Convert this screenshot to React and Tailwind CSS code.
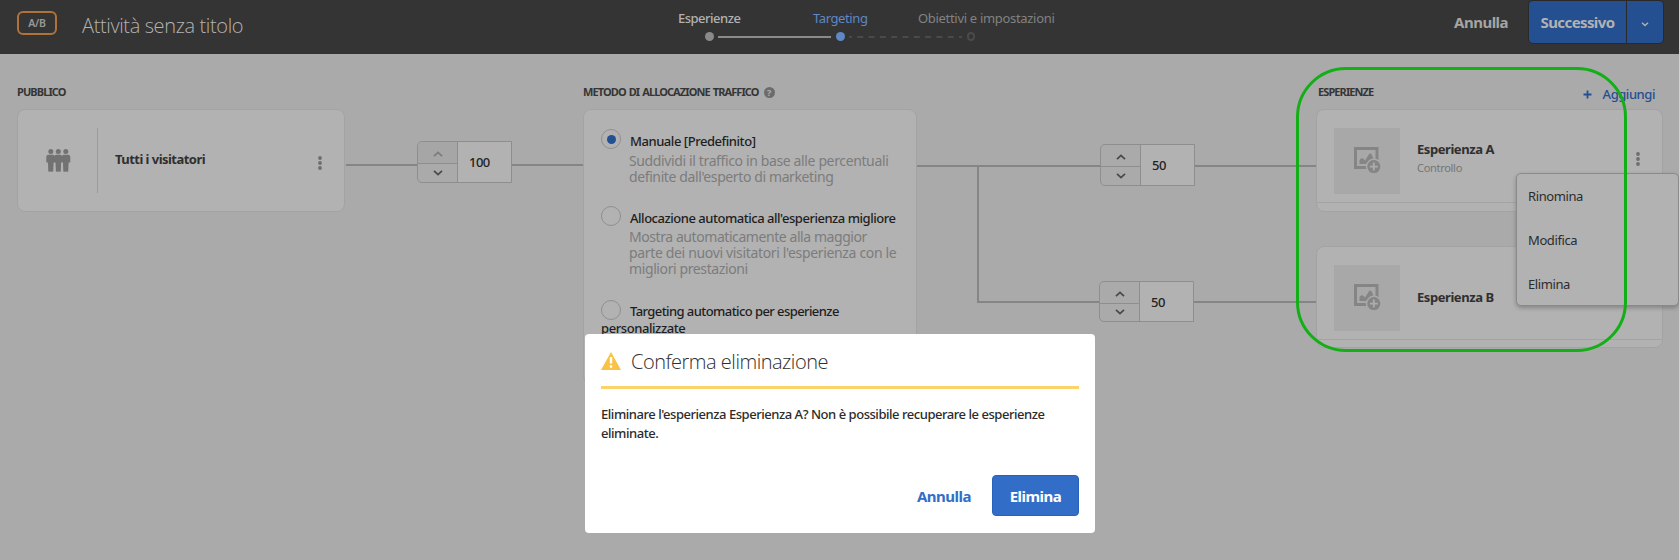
function Chevron({ up = false, className = '' }) {
  return (
    <svg className={className} width="10" height="6" viewBox="0 0 10 6" fill="none" stroke="currentColor" strokeWidth="1.8">
      <path d={up ? 'M1 5.2 L5 1.4 L9 5.2' : 'M1 0.8 L5 4.6 L9 0.8'} />
    </svg>
  );
}

function Kebab({ className }) {
  return (
    <svg className={className} width="4" height="14" viewBox="0 0 4 14" fill="#6e6e6e">
      <circle cx="2" cy="2" r="1.9" />
      <circle cx="2" cy="7" r="1.9" />
      <circle cx="2" cy="12" r="1.9" />
    </svg>
  );
}

function PeopleIcon() {
  return (
    <svg width="25" height="23" viewBox="0 0 25 23" fill="#727272">
      {[4.8, 12.3, 19.8].map((x) => (
        <g key={x} transform={`translate(${x} 0)`}>
          <circle cx="0" cy="2.5" r="2.5" />
          <path d="M-2.9 11 H2.9 L2.4 22.4 H0.5 L0.2 16.5 H-0.2 L-0.5 22.4 H-2.4 Z" />
          <path d="M-2.4 11 H2.4 L2 22.4 H-2 Z" />
        </g>
      ))}
      <path d="M2.5 5.8 H7.2 L8.5 6.8 L9.8 5.8 H14.8 L16.1 6.8 L17.4 5.8 H22.1 Q24.3 5.8 24.3 8 V13.4 H0.3 V8 Q0.3 5.8 2.5 5.8 Z" />
    </svg>
  );
}

function ImageAddIcon() {
  return (
    <svg className="-mt-px" width="27" height="27" viewBox="0 0 27 27">
      <path d="M1.5 20.5 V1.5 H23 V13" fill="none" stroke="#858585" strokeWidth="3" />
      <path d="M0 20.5 H13" stroke="#858585" strokeWidth="3" />
      <path d="M5.5 17 V13 Q7.5 9.8 9.8 12.2 L11 13.4 L15 7.2 Q16.5 5.8 17.6 7.6 L19.5 11.5 L13.5 17 Z" fill="#858585" />
      <circle cx="19.8" cy="19.6" r="8" fill="#a8a8a8" />
      <circle cx="19.8" cy="19.6" r="6.5" fill="#858585" />
      <path d="M19.8 15.6 V23.6 M15.8 19.6 H23.8" stroke="#adadad" strokeWidth="1.8" />
    </svg>
  );
}

function Stepper({ value, upDisabled = false, short = false }) {
  return (
    <div className={`flex w-[95px] shrink-0 rounded-l-[5px] border border-[#8e8e8e] ${short ? 'h-[41px]' : 'h-[42px]'}`}>
      <div className="flex w-[40px] flex-col border-r border-[#8e8e8e] text-[#4a4a4a]">
        <div className={`flex flex-1 items-center justify-center border-b border-[#8e8e8e] pt-[3px] ${upDisabled ? 'rounded-tl-[4px] bg-[#a6a6a6] text-[#7c7c7c]' : ''}`}>
          <Chevron up />
        </div>
        <div className="flex flex-1 items-center justify-center">
          <Chevron />
        </div>
      </div>
      <div className="flex flex-1 items-center bg-[#b2b2b2] pt-0.5 pl-[11px] text-[13px] font-medium tracking-[-0.5px] text-[#222]">{value}</div>
    </div>
  );
}

function Radio({ checked = false }) {
  return (
    <span className={`flex size-5 shrink-0 items-center justify-center rounded-full border border-[#8f8f8f] ${checked ? '-mt-px' : ''}`}>
      {checked && <span className="size-[9px] rounded-full bg-[#234f93]" />}
    </span>
  );
}

function Heading({ children }) {
  return <h2 className="text-[11px] leading-4 font-bold tracking-[-0.9px] [word-spacing:1px] whitespace-nowrap text-[#353535]">{children}</h2>;
}

function ExperienceCard({ name, note, menu = false }) {
  return (
    <div className={`rounded-lg border border-[#a3a3a3] bg-[#b2b2b2] ${menu ? 'h-[103px]' : 'h-[102px]'}`}>
      <div className="flex h-[93px] border-b border-[#a3a3a3] pt-[18px] pl-[17px]">
        <div className="flex size-[66px] shrink-0 items-center justify-center bg-[#a8a8a8]">
          <ImageAddIcon />
        </div>
        <div className={`ml-[17px] flex h-[66px] flex-1 flex-col ${note ? 'pt-[11px]' : 'pt-[22px]'}`}>
          <span className="text-[13px] leading-5 font-bold tracking-[-0.44px] text-[#2f2f2f]">{name}</span>
          {note && <span className="text-[11px] leading-[18px] tracking-[-0.3px] text-[#757575]">{note}</span>}
        </div>
        {menu && <Kebab className="mt-6 mr-[22px]" />}
      </div>
    </div>
  );
}

const Line = ({ className = '' }) => <div className={`h-0.5 bg-[#858585] ${className}`} />;

function Header() {
  return (
    <header className="flex h-[54px] items-start bg-[#343434]">
      <div className="mt-[11px] ml-[17px] flex h-6 w-10 items-center justify-center rounded-[6px] border-2 border-[#b0723a] pt-0.5 text-[10.5px] font-semibold tracking-[-0.2px] text-[#999]">A/B</div>
      <h1 className="mt-3 ml-[25px] w-[596px] font-['Open_Sans'] text-[20px] leading-7 font-light tracking-[-0.38px] text-[#b2b2b2]">Attività senza titolo</h1>
      <div className="w-[776px]">
        <div className="mt-2 flex text-[13px] leading-5 whitespace-nowrap">
          <span className="w-[135px] font-medium tracking-[-0.5px] text-[#b2b2b2]">Esperienze</span>
          <span className="w-[105px] tracking-[-0.4px] text-[#5f88c4]">Targeting</span>
          <span className="tracking-[-0.31px] text-[#828282]">Obiettivi e impostazioni</span>
        </div>
        <div className="mt-[4px] ml-[27px] flex items-center">
          <span className="size-[9px] rounded-full bg-[#8a8a8a]" />
          <span className="ml-1 h-0.5 w-[113px] bg-[#8a8a8a]" />
          <span className="ml-[5px] size-[9px] rounded-full bg-[#5f88c4]" />
          <svg className="ml-1" width="113" height="2">
            <path d="M0 1 H113" stroke="#4a4a4a" strokeWidth="2" strokeDasharray="6 5.3" strokeDashoffset="3" />
          </svg>
          <span className="ml-[5px] h-[9px] w-[8px] rounded-full border-2 border-[#4a4a4a]" />
        </div>
      </div>
      <button className="mt-[11px] w-[75px] text-left text-[15px] leading-[23px] font-bold tracking-[-0.5px] text-[#a4a4a4]">Annulla</button>
      <div className="mt-px flex h-[42px] w-[134px] rounded-[4px] bg-[#244f91] ring-1 ring-[#292929]">
        <button className="w-[97px] text-[15px] font-bold tracking-[-0.6px] text-[#b2b2b2]">Successivo</button>
        <button className="flex flex-1 items-center justify-center border-l border-[#292929]">
          <svg className="mt-1" width="8" height="5" viewBox="0 0 8 5" fill="none" stroke="#b2b2b2" strokeWidth="1.4">
            <path d="M1 0.8 L4 3.6 L7 0.8" />
          </svg>
        </button>
      </div>
    </header>
  );
}

function AllocationCard() {
  return (
    <div className="h-[275px] rounded-lg border border-[#a3a3a3] bg-[#b2b2b2] pt-5 pl-[17px] whitespace-nowrap">
      <div className="flex h-[76px] gap-2">
        <Radio checked />
        <div className="pt-[3px]">
          <div className="pl-px text-[13px] leading-4 font-medium tracking-[-0.45px] text-[#1e1e1e]">Manuale [Predefinito]</div>
          <div className="mt-1 text-[14px] leading-4 text-[#7c7c7c]">
            <div className="tracking-[-0.37px]">Suddividi il traffico in base alle percentuali</div>
            <div className="tracking-[-0.39px]">definite dall'esperto di marketing</div>
          </div>
        </div>
      </div>
      <div className="flex h-[94px] gap-2">
        <Radio />
        <div className="pt-1">
          <div className="pl-px text-[13px] leading-4 font-medium tracking-[-0.47px] text-[#1e1e1e]">Allocazione automatica all'esperienza migliore</div>
          <div className="mt-[3px] text-[14px] leading-4 text-[#7c7c7c]">
            <div className="tracking-[-0.43px]">Mostra automaticamente alla maggior</div>
            <div className="tracking-[-0.34px]">parte dei nuovi visitatori l'esperienza con le</div>
            <div className="tracking-[-0.39px]">migliori prestazioni</div>
          </div>
        </div>
      </div>
      <div className="flex h-5 gap-[9px] text-[13px] leading-[17px] font-medium tracking-[-0.58px] text-[#1e1e1e]">
        <Radio />
        <div className="pt-[3px]">Targeting automatico per esperienze</div>
      </div>
      <div className="text-[13px] leading-[17px] font-medium tracking-[-0.42px] text-[#1e1e1e]">personalizzate</div>
    </div>
  );
}

function Dialog() {
  return (
    <div role="dialog" className="absolute top-[334px] left-[585px] h-[199px] w-[510px] rounded-[4px] bg-white px-4 pt-3">
      <div className="flex h-[43px] items-start border-b-3 border-[#fcd26a]">
        <svg className="mt-1.5" width="20" height="18" viewBox="0 0 20 18">
          <path d="M10 0 L20 18 H0 Z" fill="#f7c245" />
          <path d="M10 5 V11.5 M10 13.2 V15.8" stroke="#fff" strokeWidth="2.4" />
        </svg>
        <h2 className="ml-2.5 font-['Open_Sans'] text-[20px] leading-8 font-light tracking-[-0.48px] text-[#2f2f2f]">Conferma eliminazione</h2>
      </div>
      <p className="mt-4 text-[13px] leading-[19px] font-medium tracking-[-0.46px] whitespace-nowrap text-[#2c2c2c]">
        Eliminare l'esperienza Esperienza A? Non è possibile recuperare le esperienze
        <br />
        eliminate.
      </p>
      <div className="mt-8 flex items-center justify-end">
        <button className="mr-[21px] pt-px text-[15px] font-bold tracking-[-0.5px] text-[#326ec8]">Annulla</button>
        <button className="h-[41px] w-[87px] rounded-[4px] border border-[#2663bd] bg-[#326ec8] pt-px text-[15px] font-bold tracking-[-0.5px] text-white">Elimina</button>
      </div>
    </div>
  );
}

export default function App() {
  return (
    <div className="relative h-[560px] w-[1679px] overflow-hidden bg-[#aaaaaa] font-['Noto_Sans',sans-serif]">
      <Header />
      <main className="flex pt-[30px] pl-[17px]">
        <section className="w-[328px]">
          <Heading>PUBBLICO</Heading>
          <div className="mt-[9px] flex h-[103px] rounded-lg border border-[#a3a3a3] bg-[#b2b2b2]">
            <div className="mt-[18px] flex h-[65px] w-[80px] items-center border-r border-[#9c9c9c] pl-7">
              <PeopleIcon />
            </div>
            <div className="mt-[39px] flex-1 pl-[17px] text-[13px] leading-5 font-bold tracking-[-0.54px] text-[#2f2f2f]">Tutti i visitatori</div>
            <Kebab className="mt-[46px] mr-[22px]" />
          </div>
        </section>

        <div className="mt-[57px] ml-px flex h-[42px] w-[237px]">
          <Line className="mt-[23px] w-[71px]" />
          <Stepper value="100" upDisabled />
          <Line className="mt-[23px] flex-1" />
        </div>

        <section className="w-[334px]">
          <div className="mb-[9px] flex items-center">
            <Heading>METODO DI ALLOCAZIONE TRAFFICO</Heading>
            <span className="ml-[5px] flex size-[11px] items-center justify-center rounded-full bg-[#6c6c6c] text-[9px] leading-none font-bold text-[#b0b0b0]">?</span>
          </div>
          <AllocationCard />
        </section>

        <div className="flex w-[399px]">
          <div className="mt-[81px] h-[138px] w-[62px] border-t-2 border-r-2 border-[#858585]" />
          <div className="flex-1">
            <div className="mt-[60px] flex h-[42px]">
              <Line className="mt-[21px] w-[121px]" />
              <Stepper value="50" />
              <Line className="mt-[21px] flex-1" />
            </div>
            <div className="mt-[95px] flex h-[41px]">
              <Line className="mt-[20px] w-[120px]" />
              <Stepper value="50" short />
              <Line className="mt-[20px] flex-1" />
            </div>
          </div>
        </div>

        <section className="w-[347px]">
          <div className="mb-[9px] flex h-4 justify-between pr-2 pl-0.5">
            <Heading>ESPERIENZE</Heading>
            <button className="mt-1 flex items-center gap-[11px] text-[13px] leading-4 font-medium tracking-[-0.45px] text-[#234f93]">
              <svg width="9" height="9" viewBox="0 0 9 9" stroke="currentColor" strokeWidth="1.8">
                <path d="M4.5 0.5 V8.5 M0.5 4.5 H8.5" />
              </svg>
              Aggiungi
            </button>
          </div>
          <ExperienceCard name="Esperienza A" note="Controllo" menu />
          <div className="h-[34px]" />
          <ExperienceCard name="Esperienza B" />
        </section>
      </main>

      <ul className="absolute top-[173px] left-[1516px] h-[133px] w-[163px] rounded-[5px] border border-[#8a8a8a] bg-[#b2b2b2] pl-[11px] text-[13px] leading-[44px] tracking-[-0.4px] text-[#2c2c2c] shadow-[0_2px_4px_rgba(0,0,0,0.25)]">
        <li>Rinomina</li>
        <li>Modifica</li>
        <li>Elimina</li>
      </ul>
      <div className="absolute top-[67px] left-[1296px] h-[285px] w-[331px] rounded-[50px] border-3 border-[#13af16]" />
      <Dialog />
    </div>
  );
}
